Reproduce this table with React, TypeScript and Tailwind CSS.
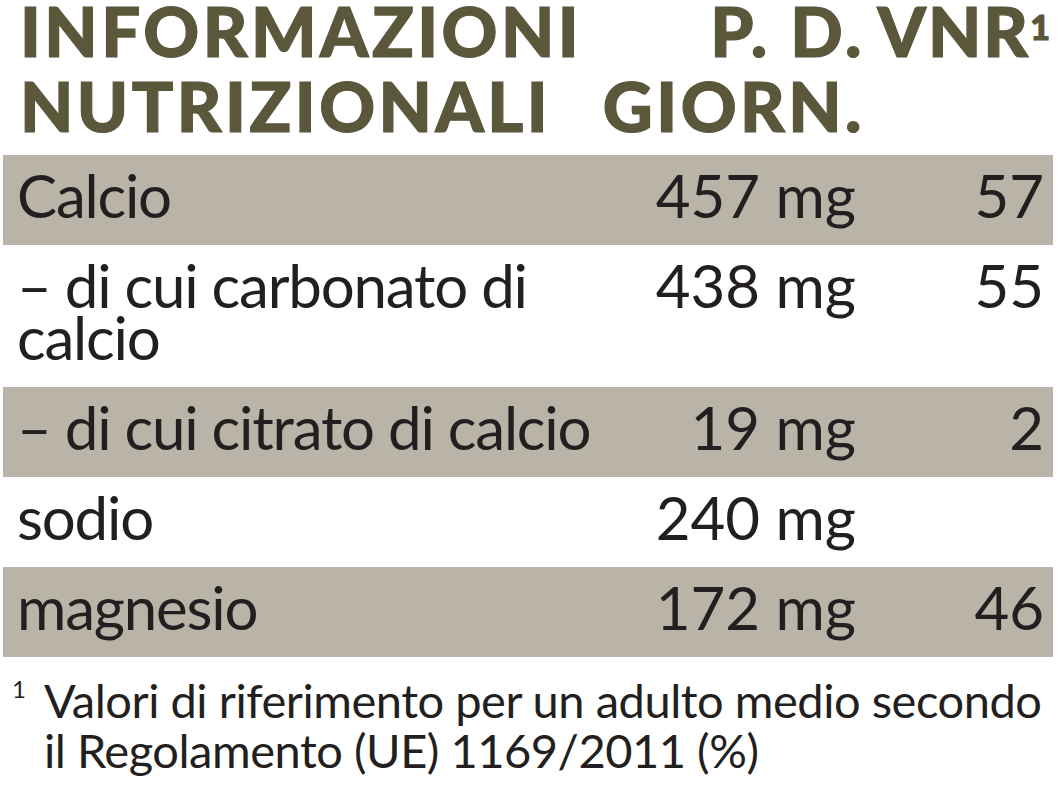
import type { ReactNode } from "react";

type Nutrient = {
  label: ReactNode;
  amount: string;
  vnr?: string;
  shaded: boolean;
};

const nutrients: Nutrient[] = [
  { label: "Calcio", amount: "457 mg", vnr: "57", shaded: true },
  {
    label: (
      <>
        – di cui carbonato di
        <br />
        calcio
      </>
    ),
    amount: "438 mg",
    vnr: "55",
    shaded: false,
  },
  { label: "– di cui citrato di calcio", amount: "19 mg", vnr: "2", shaded: true },
  { label: "sodio", amount: "240 mg", shaded: false },
  { label: "magnesio", amount: "172 mg", vnr: "46", shaded: true },
];

function NutrientRow({ row }: { row: Nutrient }) {
  return (
    <div
      className={`mr-[10px] ml-[3px] grid grid-cols-[minmax(0,1fr)_266px_188px] pt-[14px] pr-[9px] pb-[24px] pl-[14px] text-[60px] leading-[52px] text-[#231f20] ${
        row.shaded ? "bg-[#bab3a7]" : "bg-white"
      }`}
    >
      <span className="whitespace-nowrap tracking-[-0.02em]">{row.label}</span>
      <span className="whitespace-nowrap text-right">{row.amount}</span>
      <span className="whitespace-nowrap text-right">{row.vnr ?? ""}</span>
    </div>
  );
}

export default function App() {
  return (
    <div className="min-h-[788px] w-[1063px] overflow-hidden bg-white font-['Lato','Liberation_Sans',sans-serif]">
      <header className="mr-[13px] ml-[20px] grid grid-cols-[minmax(0,1fr)_290px_185px] gap-y-[14px] text-[69px] leading-[61px] font-black tracking-[0.05em] text-[#5a573b] [-webkit-text-stroke:1.2px_#5a573b]">
        <div className="whitespace-nowrap">INFORMAZIONI</div>
        <div className="whitespace-nowrap text-right">P. D.</div>
        <div className="whitespace-nowrap text-right tracking-[0.03em]">
          VNR<sup className="text-[34px] tracking-normal">1</sup>
        </div>
        <div className="whitespace-nowrap">NUTRIZIONALI</div>
        <div className="whitespace-nowrap text-right">GIORN.</div>
        <div />
      </header>

      <section className="mt-[19px] flex flex-col">
        {nutrients.map((row, index) => (
          <NutrientRow key={index} row={row} />
        ))}
      </section>

      <footer className="mt-[18px] flex gap-[18px] pl-[12px] text-[#231f20]">
        <span className="pt-[2px] text-[24px] leading-[24px]">1</span>
        <p className="whitespace-nowrap text-[47px] leading-[50px] tracking-[-0.01em]">
          Valori di riferimento per un adulto medio secondo
          <br />
          il Regolamento (UE) 1169/2011 (%)
        </p>
      </footer>
    </div>
  );
}
